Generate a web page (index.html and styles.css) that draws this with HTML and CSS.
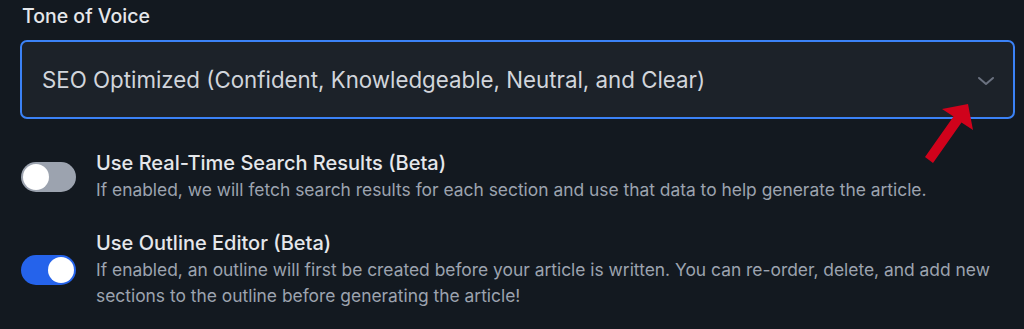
FILE: index.html
```html
<!DOCTYPE html>
<html>
<head>
<meta charset="utf-8">
<link rel="stylesheet" href="styles.css">
</head>
<body>
<div class="page">
  <label class="field-label">Tone of Voice</label>
  <div class="select">
    <span class="select-value">SEO Optimized (Confident, Knowledgeable, Neutral, and Clear)</span>
    <svg class="chevron" width="18" height="10" viewBox="0 0 18 10"><path d="M2 2 L9 8 L16 2" fill="none" stroke="#6b7280" stroke-width="2" stroke-linecap="round" stroke-linejoin="round"/></svg>
    <svg class="annot-arrow" width="60" height="66" viewBox="0 0 60 66"><polygon points="5,57 33.5,16.5 22,9 48,4 53,30 41.5,22.5 13,63" fill="#d0021b"/></svg>
  </div>
  <div class="options">
    <div class="option">
      <span class="toggle"><span class="knob"></span></span>
      <div class="option-text">
        <div class="option-title">Use Real-Time Search Results (Beta)</div>
        <div class="option-desc">If enabled, we will fetch search results for each section and use that data to help generate the article.</div>
      </div>
    </div>
    <div class="option">
      <span class="toggle on"><span class="knob"></span></span>
      <div class="option-text">
        <div class="option-title">Use Outline Editor (Beta)</div>
        <div class="option-desc">If enabled, an outline will first be created before your article is written. You can re-order, delete, and add new sections to the outline before generating the article!</div>
      </div>
    </div>
  </div>
</div>
</body>
</html>
```
FILE: styles.css
```css
html, body {
  margin: 0;
  padding: 0;
  background: #131920;
}
body {
  font-family: Inter, "Noto Sans", sans-serif;
  color: #e5e7eb;
}
.page {
  padding: 2px 9px 0 20px;
}
.field-label {
  display: block;
  font-size: 19.5px;
  line-height: 28px;
  font-weight: 500;
  color: #e5e7eb;
  padding-left: 2px;
  margin-bottom: 10px;
}
.select {
  position: relative;
  display: flex;
  align-items: center;
  justify-content: space-between;
  height: 75px;
  border: 2px solid #3b82f6;
  border-radius: 7px;
  background: #1c2229;
  padding: 0 18px 0 20px;
}
.select-value {
  font-size: 22.3px;
  color: #d1d5db;
}
.chevron {
  margin-top: 2px;
}
.annot-arrow {
  position: absolute;
  left: 898px;
  top: 58px;
}
.options {
  padding-top: 30px;
}
.option {
  display: flex;
  align-items: center;
  gap: 20px;
  margin-bottom: 26px;
}
.toggle {
  flex: none;
  position: relative;
  width: 55px;
  height: 30px;
  border-radius: 15px;
  background: #9ca3af;
  margin-left: 1px;
  margin-top: 2px;
}
.toggle.on {
  background: #2563eb;
}
.knob {
  position: absolute;
  top: 2px;
  left: 2px;
  width: 26px;
  height: 26px;
  border-radius: 50%;
  background: #ffffff;
}
.toggle.on .knob {
  left: 27px;
}
.option-title {
  font-size: 20px;
  line-height: 28px;
  font-weight: 500;
  color: #e5e7eb;
}
.option-desc {
  font-size: 17.4px;
  line-height: 26px;
  color: #9ca3af;
}
```
